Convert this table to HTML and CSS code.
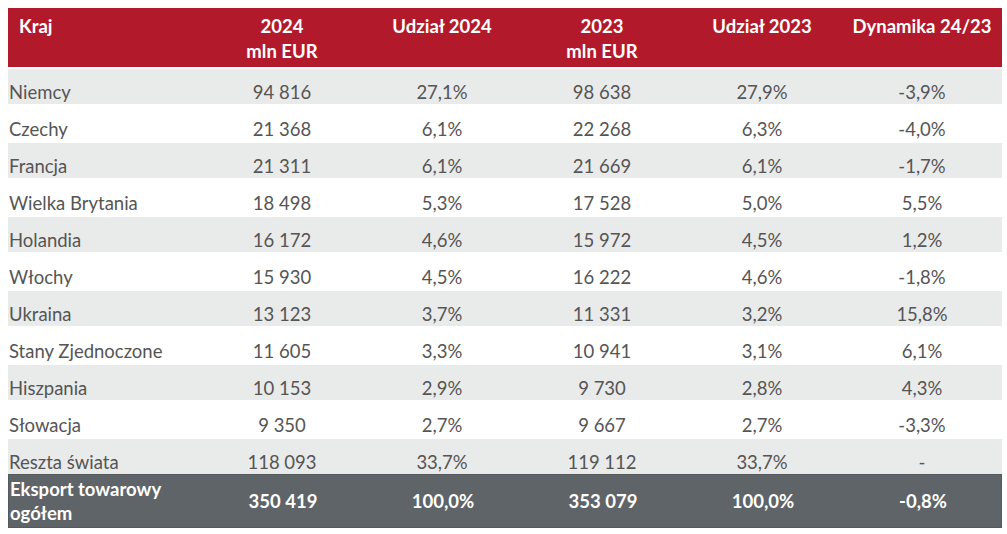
FILE: index.html
```html
<!DOCTYPE html>
<html lang="pl">
<head>
<meta charset="utf-8">
<title>Eksport towarowy</title>
<link rel="stylesheet" href="styles.css">
</head>
<body>
<div class="table">
  <div class="row head">
    <div class="cell first">Kraj</div>
    <div class="cell">2024<br>mln EUR</div>
    <div class="cell">Udział 2024</div>
    <div class="cell">2023<br>mln EUR</div>
    <div class="cell">Udział 2023</div>
    <div class="cell">Dynamika 24/23</div>
  </div>
  <div class="row shade"><div class="cell first">Niemcy</div><div class="cell">94 816</div><div class="cell">27,1%</div><div class="cell">98 638</div><div class="cell">27,9%</div><div class="cell">-3,9%</div></div>
  <div class="row"><div class="cell first">Czechy</div><div class="cell">21 368</div><div class="cell">6,1%</div><div class="cell">22 268</div><div class="cell">6,3%</div><div class="cell">-4,0%</div></div>
  <div class="row shade"><div class="cell first">Francja</div><div class="cell">21 311</div><div class="cell">6,1%</div><div class="cell">21 669</div><div class="cell">6,1%</div><div class="cell">-1,7%</div></div>
  <div class="row"><div class="cell first">Wielka Brytania</div><div class="cell">18 498</div><div class="cell">5,3%</div><div class="cell">17 528</div><div class="cell">5,0%</div><div class="cell">5,5%</div></div>
  <div class="row shade"><div class="cell first">Holandia</div><div class="cell">16 172</div><div class="cell">4,6%</div><div class="cell">15 972</div><div class="cell">4,5%</div><div class="cell">1,2%</div></div>
  <div class="row"><div class="cell first">Włochy</div><div class="cell">15 930</div><div class="cell">4,5%</div><div class="cell">16 222</div><div class="cell">4,6%</div><div class="cell">-1,8%</div></div>
  <div class="row shade"><div class="cell first">Ukraina</div><div class="cell">13 123</div><div class="cell">3,7%</div><div class="cell">11 331</div><div class="cell">3,2%</div><div class="cell">15,8%</div></div>
  <div class="row"><div class="cell first">Stany Zjednoczone</div><div class="cell">11 605</div><div class="cell">3,3%</div><div class="cell">10 941</div><div class="cell">3,1%</div><div class="cell">6,1%</div></div>
  <div class="row shade"><div class="cell first">Hiszpania</div><div class="cell">10 153</div><div class="cell">2,9%</div><div class="cell">9 730</div><div class="cell">2,8%</div><div class="cell">4,3%</div></div>
  <div class="row"><div class="cell first">Słowacja</div><div class="cell">9 350</div><div class="cell">2,7%</div><div class="cell">9 667</div><div class="cell">2,7%</div><div class="cell">-3,3%</div></div>
  <div class="row shade"><div class="cell first">Reszta świata</div><div class="cell">118 093</div><div class="cell">33,7%</div><div class="cell">119 112</div><div class="cell">33,7%</div><div class="cell">-</div></div>
  <div class="row total"><div class="cell first">Eksport towarowy<br>ogółem</div><div class="cell">350 419</div><div class="cell">100,0%</div><div class="cell">353 079</div><div class="cell">100,0%</div><div class="cell">-0,8%</div></div>
</div>
</body>
</html>
```

FILE: styles.css
```css
html, body {
  margin: 0;
  padding: 0;
  background: #ffffff;
}

body {
  padding: 8px;
  font-family: Lato, "Liberation Sans", sans-serif;
  font-size: 18.5px;
  color: #555555;
}

.table {
  width: 994px;
}

.row {
  display: grid;
  grid-template-columns: 194px repeat(5, 160px);
  height: 37px;
  box-sizing: border-box;
  border-top: 2px solid #ffffff;
  align-items: end;
}

.cell {
  text-align: center;
  line-height: 22px;
  padding-bottom: 1px;
  white-space: nowrap;
}

.cell.first {
  text-align: left;
  padding-left: 1px;
}

.shade {
  background: #e9eaea;
}

.head {
  height: 59px;
  border-top: 0;
  background: #b2192b;
  color: #ffffff;
  font-weight: 700;
  align-items: start;
}

.head .cell {
  line-height: 25px;
  padding-top: 6px;
  padding-bottom: 0;
}

.head .cell.first {
  padding-left: 11px;
}

.total {
  height: 54px;
  border: 1px solid #55595c;
  background: #5f6468;
  color: #ffffff;
  font-weight: 700;
  align-items: center;
}

.total .cell {
  line-height: 24.5px;
  padding-bottom: 0;
}
```
